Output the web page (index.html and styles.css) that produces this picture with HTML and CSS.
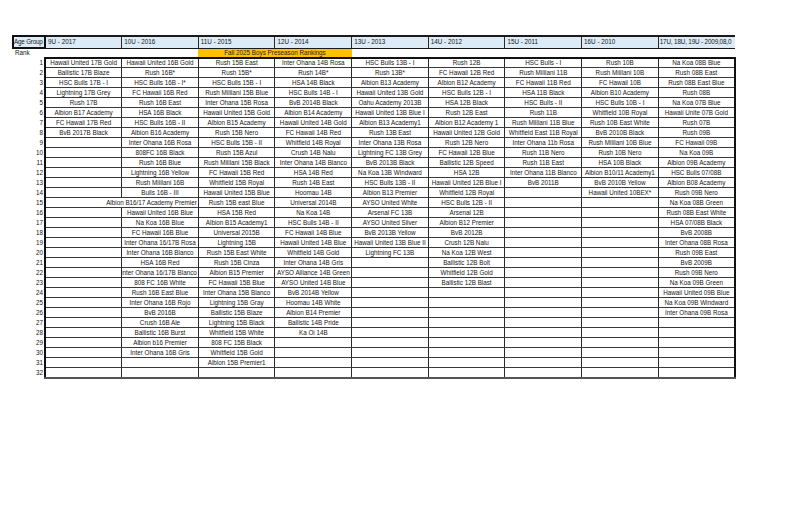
FILE: index.html
```html
<!DOCTYPE html>
<html lang="en">
<head>
<meta charset="utf-8">
<title>Fall 2025 Boys Preseason Rankings</title>
<link rel="stylesheet" href="styles.css">
</head>
<body>
<table class="sheet">
<colgroup><col class="c0"><col class="c"><col class="c"><col class="c"><col class="c"><col class="c"><col class="c"><col class="c"><col class="c"><col class="c"></colgroup>
<thead>
<tr class="hdr"><td class="ag">Age Group</td><td>9U - 2017</td><td>10U - 2016</td><td>11U - 2015</td><td>12U - 2014</td><td>13U - 2013</td><td>14U - 2012</td><td>15U - 2011</td><td>16U - 2010</td><td class="last">17U, 18U, 19U - 2009,08,0</td></tr>
<tr class="rank"><td class="rk">Rank</td><td></td><td></td><td colspan="2" class="banner">Fall 2025 Boys Preseason Rankings</td><td></td><td></td><td></td><td></td><td></td></tr>
</thead>
<tbody class="data">
<tr><td class="n">1</td><td>Hawaii United 17B Gold</td><td>Hawaii United 16B Gold</td><td>Rush 15B East</td><td>Inter Ohana 14B Rosa</td><td>HSC Bulls 13B - I</td><td>Rush 12B</td><td>HSC Bulls - I</td><td>Rush 10B</td><td>Na Koa 08B Blue</td></tr>
<tr><td class="n">2</td><td>Ballistic 17B Blaze</td><td>Rush 16B*</td><td>Rush 15B*</td><td>Rush 14B*</td><td>Rush 13B*</td><td>FC Hawaii 12B Red</td><td>Rush Mililani 11B</td><td>Rush Mililani 10B</td><td>Rush 08B East</td></tr>
<tr><td class="n">3</td><td>HSC Bulls 17B - I</td><td>HSC Bulls 16B - I*</td><td>HSC Bulls 15B - I</td><td>HSA 14B Black</td><td>Albion B13 Academy</td><td>Albion B12 Academy</td><td>FC Hawaii 11B Red</td><td>FC Hawaii 10B</td><td>Rush 08B East Blue</td></tr>
<tr><td class="n">4</td><td>Lightning 17B Grey</td><td>FC Hawaii 16B Red</td><td>Rush Mililani 15B Blue</td><td>HSC Bulls 14B - I</td><td>Hawaii United 13B Gold</td><td>HSC Bulls 12B - I</td><td>HSA 11B Black</td><td>Albion B10 Academy</td><td>Rush 08B</td></tr>
<tr><td class="n">5</td><td>Rush 17B</td><td>Rush 16B East</td><td>Inter Ohana 15B Rosa</td><td>BvB 2014B Black</td><td>Oahu Academy 2013B</td><td>HSA 12B Black</td><td>HSC Bulls - II</td><td>HSC Bulls 10B - I</td><td>Na Koa 07B Blue</td></tr>
<tr><td class="n">6</td><td>Albion B17 Academy</td><td>HSA 16B Black</td><td>Hawaii United 15B Gold</td><td>Albion B14 Academy</td><td>Hawaii United 13B Blue I</td><td>Rush 12B East</td><td>Rush 11B</td><td>Whitfield 10B Royal</td><td>Hawaii Unite 07B Gold</td></tr>
<tr><td class="n">7</td><td>FC Hawaii 17B Red</td><td>HSC Bulls 16B - II</td><td>Albion B15 Academy</td><td>Hawaii United 14B Gold</td><td>Albion B13 Academy1</td><td>Albion B12 Academy 1</td><td>Rush Mililani 11B Blue</td><td>Rush 10B East White</td><td>Rush 07B</td></tr>
<tr><td class="n">8</td><td>BvB 2017B Black</td><td>Albion B16 Academy</td><td>Rush 15B Nero</td><td>FC Hawaii 14B Red</td><td>Rush 13B East</td><td>Hawaii United 12B Gold</td><td>Whitfield East 11B Royal</td><td>BvB 2010B Black</td><td>Rush 09B</td></tr>
<tr><td class="n">9</td><td></td><td>Inter Ohana 16B Rosa</td><td>HSC Bulls 15B - II</td><td>Whitfield 14B Royal</td><td>Inter Ohana 13B Rosa</td><td>Rush 12B Nero</td><td>Inter Ohana 11b Rosa</td><td>Rush Mililani 10B Blue</td><td>FC Hawaii 09B</td></tr>
<tr><td class="n">10</td><td></td><td>808FC 16B Black</td><td>Rush 15B Azul</td><td>Crush 14B Nalu</td><td>Lightning FC 13B Grey</td><td>FC Hawaii 12B Blue</td><td>Rush 11B Nero</td><td>Rush 10B Nero</td><td>Na Koa 09B</td></tr>
<tr><td class="n">11</td><td></td><td>Rush 16B Blue</td><td>Rush Mililani 15B Black</td><td>Inter Ohana 14B Blanco</td><td>BvB 2013B Black</td><td>Ballistic 12B Speed</td><td>Rush 11B East</td><td>HSA 10B Black</td><td>Albion 09B Academy</td></tr>
<tr><td class="n">12</td><td></td><td>Lightning 16B Yellow</td><td>FC Hawaii 15B Red</td><td>HSA 14B Red</td><td>Na Koa 13B Windward</td><td>HSA 12B</td><td>Inter Ohana 11B Blanco</td><td>Albion B10/11 Academy1</td><td>HSC Bulls 07/08B</td></tr>
<tr><td class="n">13</td><td></td><td>Rush Mililani 16B</td><td>Whitfield 15B Royal</td><td>Rush 14B East</td><td>HSC Bulls 13B - II</td><td>Hawaii United 12B Blue I</td><td>BvB 2011B</td><td>BvB 2010B Yellow</td><td>Albion B08 Academy</td></tr>
<tr><td class="n">14</td><td></td><td>Bulls 16B - III</td><td>Hawaii United 15B Blue</td><td>Hoomau 14B</td><td>Albion B13 Premier</td><td>Whitfield 12B Royal</td><td></td><td>Hawaii United 10BEX*</td><td>Rush 09B Nero</td></tr>
<tr><td class="n">15</td><td class="nb"></td><td class="ov"><div class="spillbox">Albion B16/17 Academy Premier</div></td><td>Rush 15B east Blue</td><td>Universal 2014B</td><td>AYSO United White</td><td>HSC Bulls 12B - II</td><td></td><td></td><td>Na Koa 08B Green</td></tr>
<tr><td class="n">16</td><td></td><td>Hawaii United 16B Blue</td><td>HSA 15B Red</td><td>Na Koa 14B</td><td>Arsenal FC 13B</td><td>Arsenal 12B</td><td></td><td></td><td>Rush 08B East White</td></tr>
<tr><td class="n">17</td><td></td><td>Na Koa 16B Blue</td><td>Albion B15 Academy1</td><td>HSC Bulls 14B - II</td><td>AYSO United Silver</td><td>Albion B12 Premier</td><td></td><td></td><td>HSA 07/08B Black</td></tr>
<tr><td class="n">18</td><td></td><td>FC Hawaii 16B Blue</td><td>Universal 2015B</td><td>FC Hawaii 14B Blue</td><td>BvB 2013B Yellow</td><td>BvB 2012B</td><td></td><td></td><td>BvB 2008B</td></tr>
<tr><td class="n">19</td><td></td><td>Inter Ohana 16/17B Rosa</td><td>Lightning 15B</td><td>Hawaii United 14B Blue</td><td>Hawaii United 13B Blue II</td><td>Crush 12B Nalu</td><td></td><td></td><td>Inter Ohana 08B Rosa</td></tr>
<tr><td class="n">20</td><td></td><td>Inter Ohana 16B Blanco</td><td>Rush 15B East White</td><td>Whitfield 14B Gold</td><td>Lightning FC 13B</td><td>Na Koa 12B West</td><td></td><td></td><td>Rush 09B East</td></tr>
<tr><td class="n">21</td><td></td><td>HSA 16B Red</td><td>Rush 15B Cinza</td><td>Inter Ohana 14B Gris</td><td></td><td>Ballistic 12B Bolt</td><td></td><td></td><td>BvB 2009B</td></tr>
<tr><td class="n">22</td><td></td><td class="ov"><div class="spillbox">Inter Ohana 16/17B Blanco</div></td><td>Albion B15 Premier</td><td>AYSO Alliance 14B Green</td><td></td><td>Whitfield 12B Gold</td><td></td><td></td><td>Rush 09B Nero</td></tr>
<tr><td class="n">23</td><td></td><td>808 FC 16B White</td><td>FC Hawaii 15B Blue</td><td>AYSO United 14B Blue</td><td></td><td>Ballistic 12B Blast</td><td></td><td></td><td>Na Koa 09B Green</td></tr>
<tr><td class="n">24</td><td></td><td>Rush 16B East Blue</td><td>Inter Ohana 15B Blanco</td><td>BvB 2014B Yellow</td><td></td><td></td><td></td><td></td><td>Hawaii United 09B Blue</td></tr>
<tr><td class="n">25</td><td></td><td>Inter Ohana 16B Rojo</td><td>Lightning 15B Gray</td><td>Hoomau 14B White</td><td></td><td></td><td></td><td></td><td>Na Koa 09B Windward</td></tr>
<tr><td class="n">26</td><td></td><td>BvB 2016B</td><td>Ballistic 15B Blaze</td><td>Albion B14 Premier</td><td></td><td></td><td></td><td></td><td>Inter Ohana 09B Rosa</td></tr>
<tr><td class="n">27</td><td></td><td>Crush 16B Ale</td><td>Lightning 15B Black</td><td>Ballistic 14B Pride</td><td></td><td></td><td></td><td></td><td></td></tr>
<tr><td class="n">28</td><td></td><td>Ballistic 16B Burst</td><td>Whitfield 15B White</td><td>Ka Oi 14B</td><td></td><td></td><td></td><td></td><td></td></tr>
<tr><td class="n">29</td><td></td><td>Albion b16 Premier</td><td>808 FC 15B Black</td><td></td><td></td><td></td><td></td><td></td><td></td></tr>
<tr><td class="n">30</td><td></td><td>Inter Ohana 16B Gris</td><td>Whitfield 15B Gold</td><td></td><td></td><td></td><td></td><td></td><td></td></tr>
<tr><td class="n">31</td><td></td><td></td><td>Albion 15B Premier1</td><td></td><td></td><td></td><td></td><td></td><td></td></tr>
<tr><td class="n">32</td><td></td><td></td><td></td><td></td><td></td><td></td><td></td><td></td><td></td></tr>
</tbody>
</table>
</body>
</html>
```
FILE: styles.css
```css
html, body {
  margin: 0;
  padding: 0;
  background: #ffffff;
}

body {
  font-family: "Liberation Sans", Arial, sans-serif;
  font-size: 6.3px;
  color: #161616;
}

.sheet {
  margin: 35px 0 0 12px;
  border-collapse: collapse;
  table-layout: fixed;
  width: 722px;
}

col.c0 { width: 32px; }
col.c { width: 76.67px; }

.sheet td {
  padding: 0 1px;
  white-space: nowrap;
  overflow: hidden;
  text-align: center;
  vertical-align: middle;
  line-height: 8px;
}

.hdr td {
  height: 10px;
  background: #ddebf7;
  border-top: 2px solid #1a1a1a;
  border-bottom: 1px solid #1a1a1a;
  border-left: 1px solid #2a2a2a;
  text-align: left;
  padding-left: 2px;
}

.hdr td.ag {
  border: 2px solid #111111;
  padding: 0;
  letter-spacing: -0.2px;
}

.hdr td.last {
  letter-spacing: -0.15px;
  padding-left: 1px;
}

.rank td {
  height: 8px;
}

.rank td.rk {
  text-align: left;
  padding-left: 2px;
}

.rank td.banner {
  background: #ffc000;
  text-align: center;
  color: #222;
}

.data tr {
  height: 10px;
}

.data td {
  border-left: 1px solid #2a2a2a;
  border-bottom: 1px solid #3a3a3a;
}

.data td.n {
  border: none;
  text-align: right;
  padding: 0 1px 0 0;
}

.data td:nth-child(2) {
  border-left: 2px solid #111111;
}

.data td:last-child {
  border-right: 2px solid #111111;
}

.data tr:first-child td:not(.n) {
  border-top: 2px solid #111111;
}

.data tr:last-child td:not(.n) {
  border-bottom: 2px solid #555555;
}

.data td.nb {
  border-right-style: hidden;
}

.data td.ov {
  overflow: visible;
}

.spillbox {
  margin-left: -40px;
  text-align: right;
}
```
